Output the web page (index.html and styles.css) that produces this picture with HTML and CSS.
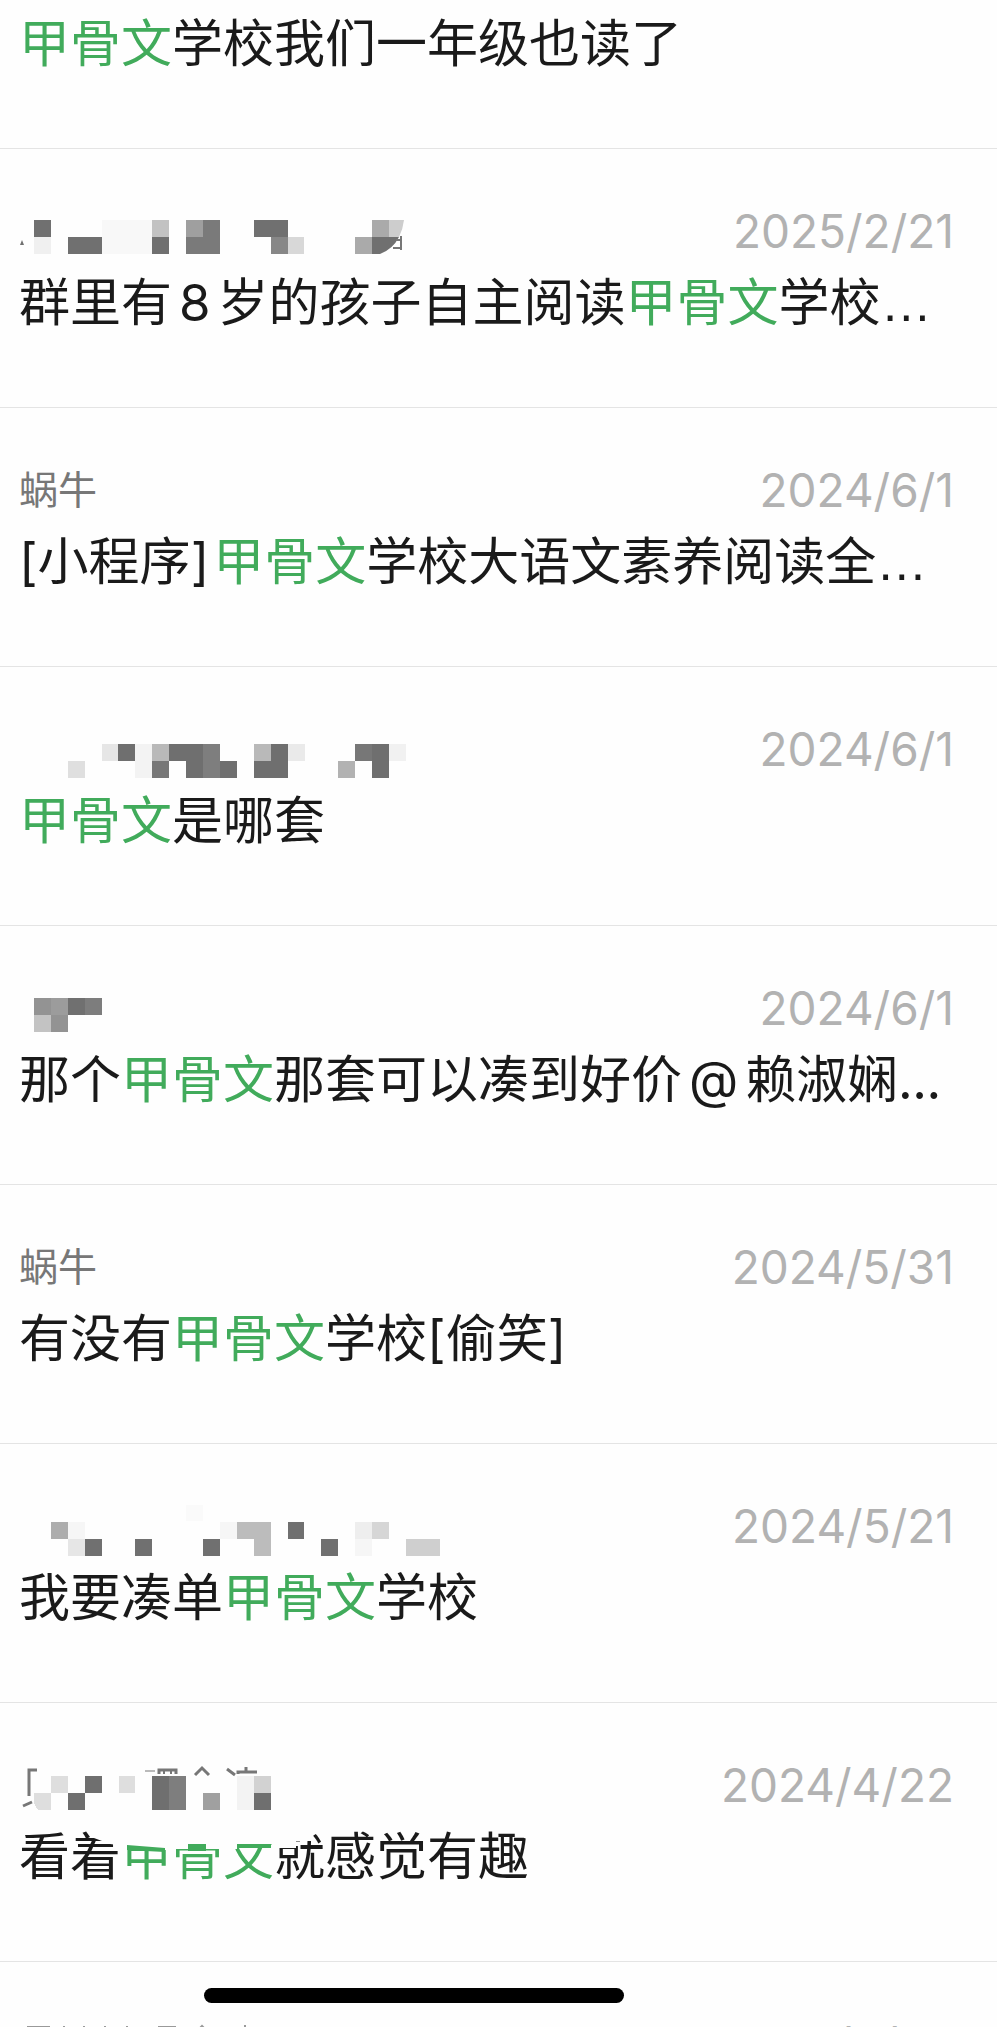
FILE: index.html
```html
<!DOCTYPE html>
<html lang="zh-CN">
<head>
<meta charset="utf-8">
<meta name="viewport" content="width=device-width, initial-scale=1">
<title>聊天记录</title>
<link rel="stylesheet" href="styles.css">
</head>
<body>
<main class="screen">
  <ul class="results">
    <li class="result result-first">
      <p class="message"><mark>甲骨文</mark>学校我们一年级也读了</p>
    </li>
    <li class="result">
      <div class="meta">
        <svg class="mosaic" viewBox="19 0 440 58" aria-hidden="true" shape-rendering="crispEdges">
          <path fill="#707070" d="M34 18h17v17H34zM68 35h34v17H68zM152 35h17v17h-17zM254 18h34v17h-34z"/>
          <path fill="#f0f0f0" d="M34 35h17v17H34z"/>
          <path fill="#f8f8f8" d="M102 18h50v34h-50z"/>
          <path fill="#c2c2c2" d="M152 18h17v17h-17z"/>
          <path fill="#9f9f9f" d="M186 18h17v17h-17z"/>
          <path fill="#7a7a7a" d="M203 18h17v34h-34V35h17z"/>
          <path fill="#878787" d="M271 35h17v17h-17z"/>
          <path fill="#d8d8d8" d="M288 35h16v17h-16z"/>
          <path fill="#aaa" d="M355 35h17v17h-17zM372 18h17v17h-17z"/>
          <g shape-rendering="auto">
            <path fill="#cdcdcd" d="M389 18h15q-1 9-5 17h-10z"/>
            <path fill="#707070" d="M372 35h27q-6 12-19 17h-8zM20 43l2-5 2 5z"/>
            <path fill="none" stroke="#777" stroke-width="2" d="M401 34v14M396 38h5M393 46h8"/>
          </g>
        </svg>
        <time class="date">2025/2/21</time>
      </div>
      <p class="message">群里有<span class="latin spaced">8</span>岁的孩子自主阅读<mark>甲骨文</mark>学校<span class="more">…</span></p>
    </li>
    <li class="result">
      <div class="meta">
        <span class="name">蜗牛</span>
        <time class="date">2024/6/1</time>
      </div>
      <p class="message"><span class="latin">[</span>小程序<span class="latin tail">]</span><mark>甲骨文</mark>学校大语文素养阅读全<span class="more">…</span></p>
    </li>
    <li class="result">
      <div class="meta">
        <svg class="mosaic" viewBox="19 0 440 58" aria-hidden="true" shape-rendering="crispEdges">
          <path fill="#dfdfdf" d="M68 41h17v17H68z"/>
          <path fill="#e6e6e6" d="M102 24h16v17h-16z"/>
          <path fill="#6f6f6f" d="M118 24h17v17h-17zM169 24h34v34h-17V41h-17zM220 41h17v17h-17zM271 24h17v34h-34V41h17zM372 24h17v34h-17z"/>
          <path fill="#f3f3f3" d="M135 24h17v34h-17z"/>
          <path fill="#b9b9b9" d="M152 24h17v17h-17zM254 24h17v17h-17z"/>
          <path fill="#777" d="M152 41h17v17h-17zM355 24h17v17h-17z"/>
          <path fill="#7e7e7e" d="M203 24h17v34h-17z"/>
          <path fill="#eaeaea" d="M288 24h17v17h-17z"/>
          <path fill="#b2b2b2" d="M338 41h17v17h-17z"/>
          <path fill="#f1f1f1" d="M389 24h17v17h-17z"/>
        </svg>
        <time class="date">2024/6/1</time>
      </div>
      <p class="message"><mark>甲骨文</mark>是哪套</p>
    </li>
    <li class="result">
      <div class="meta">
        <svg class="mosaic" viewBox="19 0 440 58" aria-hidden="true" shape-rendering="crispEdges">
          <path fill="#939393" d="M34 19h17v17H34zM51 36h17v17H51z"/>
          <path fill="#9c9c9c" d="M51 19h17v17H51z"/>
          <path fill="#707070" d="M68 19h17v17H68z"/>
          <path fill="#7d7d7d" d="M85 19h17v17H85z"/>
          <path fill="#c3c3c3" d="M34 36h17v17H34z"/>
        </svg>
        <time class="date">2024/6/1</time>
      </div>
      <p class="message">那个<mark>甲骨文</mark>那套可以凑到好价<span class="latin spaced">@</span>赖淑娴...</p>
    </li>
    <li class="result">
      <div class="meta">
        <span class="name">蜗牛</span>
        <time class="date">2024/5/31</time>
      </div>
      <p class="message">有没有<mark>甲骨文</mark>学校<span class="latin">[</span>偷笑<span class="latin">]</span></p>
    </li>
    <li class="result">
      <div class="meta">
        <svg class="mosaic" viewBox="19 0 440 58" aria-hidden="true" shape-rendering="crispEdges">
          <path fill="#fafafa" d="M186 8h17v16h-17z"/>
          <path fill="#adadad" d="M51 25h17v17H51z"/>
          <path fill="#f6f6f6" d="M68 25h17v17H68zM220 25h17v17h-17zM355 42h17v17h-17z"/>
          <path fill="#e6e6e6" d="M68 42h17v17H68z"/>
          <path fill="#707070" d="M85 42h17v17H85zM135 42h17v17h-17zM203 42h17v17h-17zM288 25h16v17h-16zM321 42h17v17h-17z"/>
          <path fill="#bcbcbc" d="M237 25h34v34h-17V42h-17z"/>
          <path fill="#eee" d="M355 25h17v17h-17z"/>
          <path fill="#d6d6d6" d="M372 25h17v17h-17z"/>
          <path fill="#cfcfcf" d="M406 42h34v17h-34z"/>
        </svg>
        <time class="date">2024/5/21</time>
      </div>
      <p class="message">我要凑单<mark>甲骨文</mark>学校</p>
    </li>
    <li class="result">
      <div class="meta">
        <svg class="mosaic" viewBox="19 0 440 58" aria-hidden="true" shape-rendering="crispEdges">
          <path fill="#dedede" d="M51 20h17v17H51zM34 37h17v17H39q-5-4-5-8zM119 20h16v17h-16z"/>
          <path fill="#6f6f6f" d="M85 20h17v17H85zM68 37h17v17H68zM152 20h17v34h-17zM254 37h17v17h-17z"/>
          <path fill="#7e7e7e" d="M169 20h17v34h-17z"/>
          <path fill="#a0a0a0" d="M203 37h17v17h-17z"/>
          <path fill="#f3f3f3" d="M237 20h17v34h-17z"/>
          <path fill="#d2d2d2" d="M254 20h17v17h-17z"/>
          <g fill="none" stroke="#777" stroke-width="3" shape-rendering="auto">
            <path d="M29 40V14h8M23 50l9-4M227 13l8 6M238 18v-2h19M246 11v4M159 18v-4h17v4M195 19l7-7 7 7"/>
            <path stroke-width="2" d="M164 15v3M171 15v3"/>
            <path stroke-width="1" d="M145 15h10"/>
          </g>
        </svg>
        <time class="date">2024/4/22</time>
      </div>
      <p class="message">看着<mark>甲骨文</mark>就感觉有趣
        <svg class="smear" viewBox="0 0 320 72" aria-hidden="true">
          <path class="smear-cover" d="M94 8h218v16h-16v7h-22v-4H237v5h-67v1h-45v-4l-15-2-16-6z"/>
          <path class="smear-ink" d="M127 28l38 3v4l-38-2zM188 27h18v7h-18zM237 27h34v4h-34z"/>
        </svg>
      </p>
    </li>
    <li class="result">
      <div class="meta">
        <svg class="mosaic" viewBox="19 0 440 58" aria-hidden="true">
          <path fill="none" stroke="#999" stroke-width="2" d="M27 12h23M64 11v9M84 11v9M105 11v9M127 11v9M158 12h18M195 18l7-7 7 7M245 10v9"/>
        </svg>
        <time class="date">2024/4/22</time>
      </div>
    </li>
  </ul>
  <div class="home-indicator"></div>
</main>
</body>
</html>
```
FILE: styles.css
```css
* {
  box-sizing: border-box;
}

body {
  margin: 0;
  background: #fefefe;
  color: #1a1a1a;
  font-family: "Noto Sans CJK SC", sans-serif;
}

.screen {
  position: relative;
  height: 100vh;
  overflow: hidden;
}

.results {
  margin: 0;
  padding: 0;
  list-style: none;
}

.result {
  padding: 53px 43px 72px 19px;
  border-bottom: 1px solid #e4e4e4;
}

.result-first {
  padding-top: 4px;
}

.meta {
  display: flex;
  align-items: center;
  justify-content: space-between;
  height: 58px;
  margin-bottom: 3px;
}

.name {
  padding-bottom: 6px;
  color: #777;
  font-size: 39px;
  line-height: 52px;
}

.date {
  color: #b2b2b2;
  font-family: Inter, sans-serif;
  font-size: 46px;
  line-height: 58px;
}

.message {
  position: relative;
  margin: 0;
  font-size: 51px;
  line-height: 72px;
  white-space: nowrap;
}

.message mark {
  background: none;
  color: #41ab5b;
}

.more {
  font-family: "Liberation Sans", sans-serif;
  line-height: 1;
}

.latin {
  font-family: Inter, sans-serif;
  line-height: 1;
}

.spaced {
  padding: 0 7px;
}

.tail {
  padding-right: 4px;
}

.mosaic {
  flex: none;
  width: 440px;
  height: 58px;
  overflow: visible;
}

.smear {
  position: absolute;
  top: 0;
  left: -19px;
  width: 320px;
  height: 72px;
}

.smear-cover {
  fill: #fefefe;
}

.smear-ink {
  fill: #41ab5b;
}

.home-indicator {
  position: absolute;
  bottom: 24px;
  left: 204px;
  width: 420px;
  height: 15px;
  border-radius: 8px;
  background: #000;
}
```
